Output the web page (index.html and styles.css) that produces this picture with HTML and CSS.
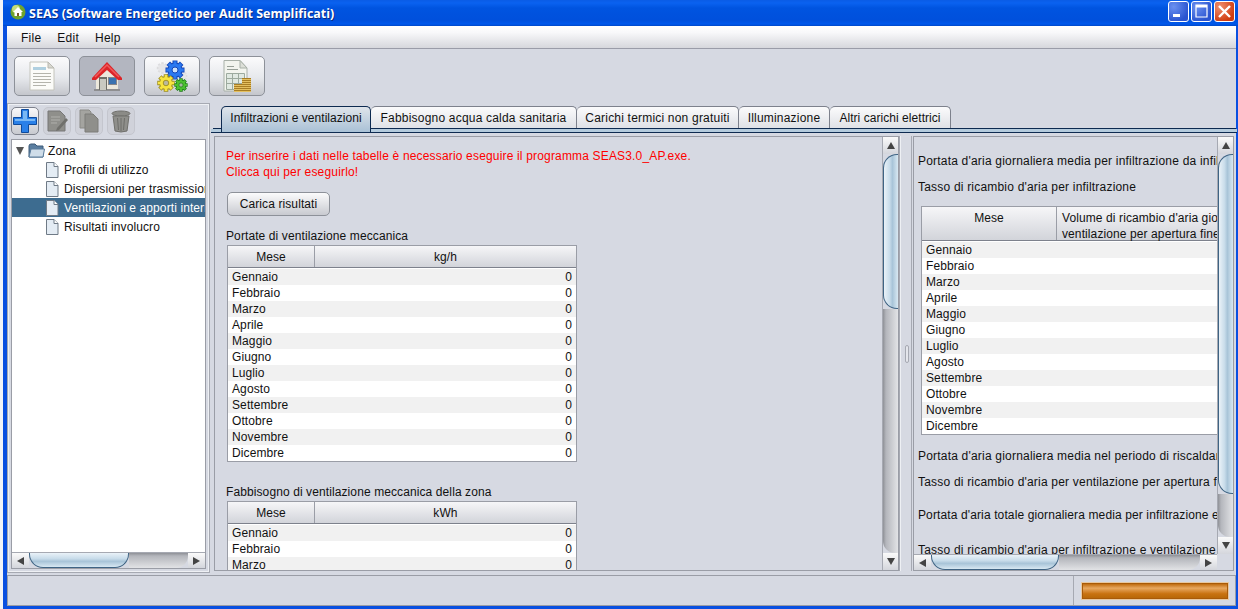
FILE: index.html
```html
<!DOCTYPE html>
<html lang="it">
<head>
  <meta charset="UTF-8">
  <title>SEAS (Software Energetico per Audit Semplificati)</title>
  <link rel="stylesheet" href="styles.css">
</head>
<body>
<div class="window">

  <!-- Barra del titolo -->
  <div class="titlebar">
    <svg class="app-icon" width="16" height="16" viewBox="0 0 16 16">
      <circle cx="8" cy="8" r="7.5" fill="#6fa32c"/>
      <circle cx="6" cy="5" r="4" fill="#c4dc7c"/>
      <path d="M8 3 L13 8 H11.5 V12 H4.5 V8 H3 Z" fill="#fff"/>
      <rect x="7" y="9" width="2" height="3" fill="#7a5a2a"/>
    </svg>
    <span class="title-text">SEAS (Software Energetico per Audit Semplificati)</span>
    <div class="win-buttons">
      <div class="win-btn"><svg width="21" height="21" viewBox="0 0 21 21"><rect x="5" y="13" width="7" height="3" fill="#fff"/></svg></div>
      <div class="win-btn"><svg width="21" height="21" viewBox="0 0 21 21"><path d="M5 4 H16 V16 H5 Z" fill="none" stroke="#fff" stroke-width="1.2"/><rect x="5" y="4" width="11" height="2.5" fill="#fff"/></svg></div>
      <div class="win-btn close"><svg width="21" height="21" viewBox="0 0 21 21"><path d="M5 5 L16 16 M16 5 L5 16" stroke="#fff" stroke-width="2.4"/></svg></div>
    </div>
  </div>

  <!-- Menu -->
  <div class="menubar">
    <span>File</span>
    <span>Edit</span>
    <span>Help</span>
  </div>

  <!-- Barra strumenti -->
  <div class="toolbar">
    <div class="tool-btn">
      <svg width="28" height="30" viewBox="0 0 28 30">
        <path d="M2 1 H20 L26 7 V29 H2 Z" fill="#fbfbf8" stroke="#c4c4bc"/>
        <path d="M20 1 V7 H26 Z" fill="#d8d8d0" stroke="#b8b8b0"/>
        <rect x="5" y="6" width="13" height="3" fill="#b0d0e0"/>
        <path d="M5 12.500 H23 M5 15.500 H23 M5 18.500 H23 M5 21.500 H23 M5 24.500 H18" stroke="#b4b4ac"/>
      </svg>
    </div>
    <div class="tool-btn active">
      <svg width="32" height="30" viewBox="0 0 32 30">
        <path d="M5 15 L16 5 L27 15 V29 H5 Z" fill="#ece8dc"/>
        <rect x="3" y="28" width="26" height="2" fill="#8e8e90"/>
        <rect x="8" y="16" width="8" height="13" fill="#6f6f68"/>
        <rect x="9" y="18" width="6" height="11" fill="#c9c9c0"/>
        <rect x="17.500" y="16.500" width="8" height="7" fill="#3a72b0" stroke="#85858a"/>
        <path d="M1 17 L16 1 L31 17 V19 H27 L16 9 L5 19 H1 Z" fill="#dc2428"/>
        <path d="M4 16 L16 4 L28 16" fill="none" stroke="#f05a5a" stroke-width="1.500"/>
      </svg>
    </div>
    <div class="tool-btn">
      <svg width="32" height="32" viewBox="0 0 32 32">
        <defs>
          <path id="gearTeeth" d="M0 -9.500 V9.500 M-9.500 0 H9.500 M-6.700 -6.700 L6.700 6.700 M-6.700 6.700 L6.700 -6.700" fill="none"/>
        </defs>
        <g transform="translate(6.500 8) scale(.6)">
          <use href="#gearTeeth" stroke="#dcdcde" stroke-width="4"/>
          <circle r="7" fill="#e6e6e8"/>
        </g>
        <g transform="translate(27 16) scale(.45)">
          <use href="#gearTeeth" stroke="#dcdcde" stroke-width="4"/>
          <circle r="7" fill="#e6e6e8"/>
        </g>
        <g transform="translate(19 10)">
          <use href="#gearTeeth" stroke="#1446b8" stroke-width="5"/>
          <circle r="7.500" fill="#1446b8"/>
          <use href="#gearTeeth" stroke="#2a78f0" stroke-width="3.200" transform="scale(.92)"/>
          <circle r="6.500" fill="#2a78f0"/>
          <circle r="3" fill="#cfe2fa" stroke="#1446b8"/>
        </g>
        <g transform="translate(10 23) scale(.92)">
          <use href="#gearTeeth" stroke="#a09020" stroke-width="5"/>
          <circle r="7.500" fill="#a09020"/>
          <use href="#gearTeeth" stroke="#f6e440" stroke-width="3.200" transform="scale(.92)"/>
          <circle r="6.500" fill="#f6e440"/>
          <circle r="3" fill="#b8b8a0" stroke="#a09020"/>
        </g>
        <g transform="translate(25 25) scale(.7)">
          <use href="#gearTeeth" stroke="#1c7c18" stroke-width="5"/>
          <circle r="7.500" fill="#1c7c18"/>
          <use href="#gearTeeth" stroke="#4cc030" stroke-width="3.200" transform="scale(.92)"/>
          <circle r="6.500" fill="#4cc030"/>
          <circle r="3" fill="#a8b8a0" stroke="#1c7c18"/>
        </g>
      </svg>
    </div>
    <div class="tool-btn">
      <svg width="30" height="32" viewBox="0 0 30 32">
        <path d="M2 .500 H18 L25 8 V31 H2 Z" fill="#f2f4ee" stroke="#a8b0a8"/>
        <path d="M18 .500 V8 H25 Z" fill="#dcdfd8" stroke="#a8b0a8"/>
        <path d="M5 6.500 H12 M5 9.500 H16" stroke="#98a098"/>
        <path d="M4.500 13.500 H22.500 V29.500 H4.500 Z M4.500 18.500 H22.500 M4.500 23.500 H22.500 M10.500 13.500 V29.500 M16.500 13.500 V29.500" fill="#e0e9e2" stroke="#9caa9e"/>
        <path d="M12 24.500 H20 M12 26.500 H20 M12 28.500 H20 M12 30.500 H20 M20 18.500 H29 M20 20.500 H29 M20 22.500 H29 M20 24.500 H29 M20 26.500 H29 M20 28.500 H29 M20 30.500 H29" stroke="#a87e24"/>
        <path d="M12 25.500 H20 M12 27.500 H20 M12 29.500 H20 M12 31.500 H20 M20 19.500 H29 M20 21.500 H29 M20 23.500 H29 M20 25.500 H29 M20 27.500 H29 M20 29.500 H29 M20 31.500 H29" stroke="#e4c060"/>
      </svg>
    </div>
  </div>

  <div class="main">

    <!-- Pannello sinistro con albero -->
    <div class="side">
      <div class="side-tools">
        <div class="mini-btn enabled">
          <svg width="26" height="26" viewBox="0 0 26 26"><path d="M9.500 1.500 H16.500 V9.500 H24.500 V16.500 H16.500 V24.500 H9.500 V16.500 H1.500 V9.500 H9.500 Z" fill="#2a80e8" stroke="#0e4a9c"/><path d="M11 3 H15 V11 H23 V13 H11 Z M3 11 H11 V13 H3 Z" fill="#7ab8f4"/></svg>
        </div>
        <div class="mini-btn">
          <svg width="22" height="24" viewBox="0 0 22 24"><path d="M2 2 H14 L19 7 V22 H2 Z" fill="#8f8f8b" stroke="#777"/><path d="M5 8 H14 M5 11 H14 M5 14 H11" stroke="#b0b0ac"/><path d="M11 19 L20 9 L22 11 L13 21 L10 22 Z" fill="#70706c"/></svg>
        </div>
        <div class="mini-btn">
          <svg width="22" height="24" viewBox="0 0 22 24"><path d="M2 1 H11 L13 3 V19 H2 Z" fill="#a4a4a0" stroke="#8a8a86"/><path d="M7 5 H15 L20 10 V23 H7 Z" fill="#8f8f8b" stroke="#7c7c78"/></svg>
        </div>
        <div class="mini-btn">
          <svg width="22" height="24" viewBox="0 0 22 24"><ellipse cx="11" cy="4.500" rx="9" ry="2.500" fill="#8b8b87" stroke="#70706c"/><path d="M3 7 H19 L17 22 Q11 24 5 22 Z" fill="#8f8f8b" stroke="#70706c"/><path d="M7.500 9 L8.500 21 M11 9 V22 M14.500 9 L13.500 21" stroke="#6e6e6a"/></svg>
        </div>
      </div>
      <div class="tree-box">
        <div class="tree">
          <div class="tree-row root">
            <span class="tree-arrow"></span>
            <svg width="17" height="16" viewBox="0 0 17 16"><path d="M1 3 Q1 1 3 1 H7 L9 3 H15 V14 H1 Z" fill="#5a7ea0" stroke="#3c5a78"/><path d="M3 6 H16.500 L15 14 H1 Z" fill="#cfdde9" stroke="#5a7c9c"/></svg>
            <span>Zona</span>
          </div>
          <div class="tree-row"><svg class="doc" width="14" height="16" viewBox="0 0 14 16"><path d="M1.500 .500 H9 L13 4.500 V15.500 H1.500 Z" fill="#e4ecf4" stroke="#6f7a86"/><path d="M9 .500 V4.500 H13" fill="#fff" stroke="#6f7a86"/></svg><span>Profili di utilizzo</span></div>
          <div class="tree-row"><svg class="doc" width="14" height="16" viewBox="0 0 14 16"><path d="M1.500 .500 H9 L13 4.500 V15.500 H1.500 Z" fill="#e4ecf4" stroke="#6f7a86"/><path d="M9 .500 V4.500 H13" fill="#fff" stroke="#6f7a86"/></svg><span>Dispersioni per trasmissione</span></div>
          <div class="tree-row selected"><svg class="doc" width="14" height="16" viewBox="0 0 14 16"><path d="M1.500 .500 H9 L13 4.500 V15.500 H1.500 Z" fill="#e4ecf4" stroke="#6f7a86"/><path d="M9 .500 V4.500 H13" fill="#fff" stroke="#6f7a86"/></svg><span>Ventilazioni e apporti interni</span></div>
          <div class="tree-row"><svg class="doc" width="14" height="16" viewBox="0 0 14 16"><path d="M1.500 .500 H9 L13 4.500 V15.500 H1.500 Z" fill="#e4ecf4" stroke="#6f7a86"/><path d="M9 .500 V4.500 H13" fill="#fff" stroke="#6f7a86"/></svg><span>Risultati involucro</span></div>
        </div>
        <div class="hbar">
          <div class="sb-btn"><i class="arr left"></i></div>
          <div class="hthumb tree-thumb"></div>
          <div class="htrack"></div>
          <div class="sb-btn"><i class="arr right"></i></div>
        </div>
      </div>
    </div>

    <!-- Area a schede -->
    <div class="tab-area">
      <div class="tabs">
        <div class="tab selected">Infiltrazioni e ventilazioni</div>
        <div class="tab">Fabbisogno acqua calda sanitaria</div>
        <div class="tab">Carichi termici non gratuiti</div>
        <div class="tab">Illuminazione</div>
        <div class="tab">Altri carichi elettrici</div>
      </div>
      <div class="tab-band"></div>
      <div class="tab-body">

        <div class="pane center-pane">
          <div class="pane-content">
            <div class="scroll-content">
              <p class="warn">Per inserire i dati nelle tabelle è necessario eseguire il programma SEAS3.0_AP.exe.</p>
              <p class="warn">Clicca qui per eseguirlo!</p>
              <button class="load-btn">Carica risultati</button>
              <p class="caption first">Portate di ventilazione meccanica</p>
              <div class="table" id="tblPortate"></div>
              <p class="caption second">Fabbisogno di ventilazione meccanica della zona</p>
              <div class="table" id="tblFabbisogno"></div>
            </div>
          </div>
          <div class="vbar">
            <div class="sb-btn"><i class="arr up"></i></div>
            <div class="vthumb center-thumb"></div>
            <div class="vtrack"></div>
            <div class="sb-btn"><i class="arr down"></i></div>
          </div>
        </div>

        <div class="divider"><span class="grip"></span></div>

        <div class="pane right-pane">
          <div class="right-top">
            <div class="pane-content">
              <div class="scroll-content wide">
                <p class="r-line l1">Portata d'aria giornaliera media per infiltrazione da infiltrazioni</p>
                <p class="r-line l2">Tasso di ricambio d'aria per infiltrazione</p>
                <div class="table wide-table" id="tblRicambio"></div>
                <p class="r-line l3">Portata d'aria giornaliera media nel periodo di riscaldamento</p>
                <p class="r-line l4">Tasso di ricambio d'aria per ventilazione per apertura finestre</p>
                <p class="r-line l5">Portata d'aria totale giornaliera media per infiltrazione e ventilazione</p>
                <p class="r-line l6">Tasso di ricambio d'aria per infiltrazione e ventilazione</p>
              </div>
            </div>
            <div class="vbar">
              <div class="sb-btn"><i class="arr up"></i></div>
              <div class="vthumb right-thumb"></div>
              <div class="vtrack"></div>
              <div class="sb-btn"><i class="arr down"></i></div>
            </div>
          </div>
          <div class="right-bottom">
            <div class="hbar">
              <div class="sb-btn"><i class="arr left"></i></div>
              <div class="hthumb pane-thumb"></div>
              <div class="htrack"></div>
              <div class="sb-btn"><i class="arr right"></i></div>
            </div>
            <div class="corner"></div>
          </div>
        </div>

      </div>
    </div>
  </div>

  <!-- Barra di stato -->
  <div class="statusbar">
    <div class="status-left"></div>
    <div class="status-right"><div class="progress"></div></div>
  </div>
</div>

<script>
  // Riempie le tabelle dei mesi
  var mesi = ['Gennaio','Febbraio','Marzo','Aprile','Maggio','Giugno','Luglio','Agosto','Settembre','Ottobre','Novembre','Dicembre'];

  function buildTable(id, head, showZero, righe) {
    var html = '<div class="thead"><div class="th month">Mese</div><div class="th val">' + head + '</div></div>';
    for (var i = 0; i < righe; i++) {
      html += '<div class="tr"><div class="td month">' + mesi[i] + '</div><div class="td val">' + (showZero ? '0' : '') + '</div></div>';
    }
    document.getElementById(id).innerHTML = html;
  }

  buildTable('tblPortate', 'kg/h', true, 12);
  buildTable('tblFabbisogno', 'kWh', true, 3);
  buildTable('tblRicambio', "Volume di ricambio d'aria giornaliero per<br>ventilazione per apertura finestre", false, 12);
</script>
</body>
</html>
```

FILE: styles.css
```css
* {
  box-sizing: border-box;
}

html, body {
  margin: 0;
  padding: 0;
  height: 609px;
  overflow: hidden;
  background: #f4f5f8;
}

body {
  font-family: 'Liberation Sans', Arial, sans-serif;
  font-size: 12px;
  letter-spacing: 0.1px;
  color: #111;
}

.window {
  margin-left: 3px;
  width: 1235px;
  height: 609px;
  display: flex;
  flex-direction: column;
  background: #d6d9e2;
  border-left: 4px solid #0a50e0;
  border-right: 2px solid #0a50e0;
  border-bottom: 3px solid #0a50e0;
}

/* barra del titolo */
.titlebar {
  height: 26px;
  margin: 0 -2px 0 -4px;
  padding-left: 7px;
  display: flex;
  align-items: center;
  background: linear-gradient(to bottom, #0a5ce6 0, #0a62f0 3px, #0054e0 8px, #0050dc 20px, #0058ec 24px, #0048c8 26px);
  color: #fff;
  flex-shrink: 0;
}

.app-icon {
  margin-right: 3px;
  margin-bottom: 2px;
}

.title-text {
  font-family: 'Open Sans', sans-serif;
  font-weight: 700;
  font-size: 12.5px;
  letter-spacing: 0;
  text-shadow: 1px 1px 0 #0a2a80;
}

.win-buttons {
  margin-left: auto;
  margin-right: 3px;
  margin-bottom: 3px;
  display: flex;
  gap: 2px;
}

.win-btn {
  width: 21px;
  height: 21px;
  border: 1px solid #fff;
  border-radius: 3px;
  background: radial-gradient(circle at 25% 25%, #6a90f0, #2a54d0 75%);
}

.win-btn svg {
  display: block;
  margin: -1px;
}

.win-btn.close {
  background: radial-gradient(circle at 25% 25%, #f09070, #d03c10 75%);
}

/* menu */
.menubar {
  height: 23px;
  padding: 2px 0 0 14px;
  display: flex;
  align-items: center;
  gap: 16px;
  background: linear-gradient(to bottom, #fff 0, #f8f8fa 30%, #d6d7dc 100%);
  border-bottom: 1px solid #9a9ca8;
  letter-spacing: 0.25px;
  flex-shrink: 0;
}

/* barra strumenti */
.toolbar {
  height: 54px;
  padding: 7px 0 0 7px;
  display: flex;
  gap: 9px;
  flex-shrink: 0;
}

.tool-btn {
  width: 56px;
  height: 40px;
  display: flex;
  align-items: center;
  justify-content: center;
  border: 1px solid #8d9199;
  border-radius: 5px;
  background: linear-gradient(to bottom, #fbfbfc 0, #e6e8ec 55%, #c4c6cc 100%);
}

.tool-btn.active {
  background: #b3b6c0;
  border-color: #8d9199;
}

.main {
  height: 472px;
  display: flex;
  flex-shrink: 0;
}

/* pannello sinistro */
.side {
  width: 203px;
  height: 470px;
  padding: 3px;
  display: flex;
  flex-direction: column;
  border: 1px solid #a6a9b2;
  box-shadow: inset 0 0 0 1px #eef0f4;
}

.side-tools {
  height: 32px;
  display: flex;
  gap: 4px;
  flex-shrink: 0;
}

.mini-btn {
  width: 28px;
  height: 28px;
  display: flex;
  align-items: center;
  justify-content: center;
  border: 1px solid #c4c6ce;
  border-radius: 5px;
  background: #d0d2da;
}

.mini-btn.enabled {
  border-color: #7d818c;
  background: linear-gradient(to bottom, #f8f8fa, #c8cad0);
}

.tree-box {
  flex: 1;
  display: flex;
  flex-direction: column;
  border: 1px solid #9a9da6;
  background: #fff;
  min-height: 0;
}

.tree {
  flex: 1;
  padding-top: 1px;
  overflow: hidden;
}

.tree-row {
  height: 19px;
  display: flex;
  align-items: center;
  padding-left: 33px;
  white-space: nowrap;
}

.tree-row .doc {
  margin-right: 5px;
  flex-shrink: 0;
}

.tree-row.root {
  padding-left: 4px;
}

.tree-row.root svg {
  margin-right: 3px;
}

.tree-arrow {
  width: 0;
  height: 0;
  margin-right: 4px;
  border-left: 4px solid transparent;
  border-right: 4px solid transparent;
  border-top: 8px solid #555;
}

.tree-row.selected {
  background: #3d6c90;
  color: #fff;
}

/* barre di scorrimento */
.hbar {
  height: 16px;
  display: flex;
  flex-shrink: 0;
  background: #d6d9e2;
  border-top: 1px solid #a6a9b2;
}

.vbar {
  width: 16px;
  display: flex;
  flex-direction: column;
  flex-shrink: 0;
  border-left: 1px solid #a6a9b2;
}

.sb-btn {
  flex: 0 0 17px;
  display: flex;
  align-items: center;
  justify-content: center;
  background: linear-gradient(to bottom, #fafafa, #d4d6dc);
}

.arr {
  width: 0;
  height: 0;
  display: block;
}

.arr.left { border: 4px solid transparent; border-left: 0; border-right: 7px solid #444; }
.arr.right { border: 4px solid transparent; border-right: 0; border-left: 7px solid #444; }
.arr.up { border: 4px solid transparent; border-top: 0; border-bottom: 7px solid #444; }
.arr.down { border: 4px solid transparent; border-bottom: 0; border-top: 7px solid #444; }

.hthumb {
  height: 100%;
  border: 1px solid #3f6484;
  border-top: 0;
  border-radius: 0 0 14px 14px / 0 0 14px 14px;
  background: linear-gradient(to bottom, #eaf2f8 0, #c8dcea 40%, #a8c4d8 60%, #d8e8f2 100%);
}

.tree-thumb { width: 100px; }
.pane-thumb { width: 128px; }

.htrack {
  flex: 1;
  background: linear-gradient(to bottom, #8f9197 0, #b4b6bc 20%, #e2e3e6 100%);
  border-radius: 0 0 12px 0;
}

.vthumb {
  width: 100%;
  border: 1px solid #3f6484;
  border-right: 0;
  border-radius: 14px 0 0 14px / 14px 0 0 14px;
  background: linear-gradient(to right, #eaf2f8 0, #c8dcea 40%, #a8c4d8 60%, #d8e8f2 100%);
}

.center-thumb { flex: 0 0 155px; }
.right-thumb { flex: 0 0 340px; }

.vtrack {
  flex: 1;
  background: linear-gradient(to right, #8f9197 0, #b4b6bc 20%, #e2e3e6 100%);
  border-radius: 0 0 0 12px;
}

/* area a schede */
.tab-area {
  flex: 1;
  min-width: 0;
  height: 470px;
  margin-left: 3px;
  display: flex;
  flex-direction: column;
}

.tabs {
  height: 26px;
  padding: 3px 0 0 8px;
  display: flex;
  flex-shrink: 0;
  border-bottom: 1px solid #0d2a50;
}

.tab {
  height: 22px;
  display: flex;
  align-items: center;
  justify-content: center;
  border: 1px solid #7d818c;
  border-bottom: 0;
  border-left: 0;
  border-radius: 5px 5px 0 0;
  background: linear-gradient(to bottom, #fbfbfc, #dfe1e6);
  letter-spacing: 0.2px;
  white-space: nowrap;
}

.tab:nth-child(1) { width: 150px; letter-spacing: 0.05px; }
.tab:nth-child(2) { width: 206px; }
.tab:nth-child(3) { width: 162px; }
.tab:nth-child(4) { width: 91px; }
.tab:nth-child(5) { width: 121px; letter-spacing: 0.05px; }

.tab.selected {
  height: 26px;
  padding-bottom: 4px;
  position: relative;
  z-index: 1;
  border: 1px solid #0d2a50;
  border-bottom: 0;
  background: linear-gradient(to bottom, #dfe4ea 0, #a9c1d6 100%);
}

.tab-band {
  height: 4px;
  flex-shrink: 0;
  margin-left: -2px;
  margin-right: -1px;
  background: #b4cbdd;
  border-bottom: 1px solid #0d2a50;
}

.tab-body {
  flex: 1;
  min-height: 0;
  margin-top: 3px;
  padding-left: 1px;
  display: flex;
}

.pane {
  height: 435px;
  border: 1px solid #9a9da6;
  display: flex;
  background: #d6d9e2;
}

.center-pane {
  width: 685px;
}

.pane-content {
  flex: 1;
  min-width: 0;
  overflow: hidden;
}

.scroll-content {
  padding: 11px 0 0 11px;
}

.scroll-content p {
  margin: 0;
}

.warn {
  color: #f00;
  height: 16px;
  line-height: 16px;
  letter-spacing: 0.17px;
  white-space: nowrap;
}

.load-btn {
  display: block;
  width: 103px;
  height: 24px;
  margin: 12px 0 0 1px;
  padding: 0;
  border: 1px solid #8d9199;
  border-radius: 5px;
  background: linear-gradient(to bottom, #fbfbfc, #c8cad0);
  font: inherit;
  letter-spacing: inherit;
  color: inherit;
}

.caption {
  height: 16px;
  line-height: 16px;
  white-space: nowrap;
}

.caption.first { margin-top: 12px; }
.caption.second { margin-top: 22px; }

.table {
  width: 350px;
  margin: 1px 0 0 1px;
  border: 1px solid #9a9da6;
  background: #fff;
}

.thead {
  display: flex;
  height: 22px;
  background: linear-gradient(to bottom, #f6f6f8, #d2d4da);
  border-bottom: 1px solid #7d818c;
}

.th {
  display: flex;
  align-items: center;
  justify-content: center;
}

.th.month,
.td.month {
  width: 87px;
  flex-shrink: 0;
}

.th.month {
  border-right: 1px solid #9a9da6;
}

.th.val,
.td.val {
  flex: 1;
}

.tr {
  display: flex;
  height: 16px;
  line-height: 16px;
}

.thead + .tr {
  margin-top: 1px;
}

.tr:nth-child(even) {
  background: #f1f1f1;
}

.td.month {
  padding-left: 4px;
}

.td.val {
  text-align: right;
  padding-right: 4px;
}

/* divisore */
.divider {
  width: 14px;
  height: 435px;
  display: flex;
  align-items: center;
  justify-content: center;
  flex-shrink: 0;
  padding-left: 1px;
  background: linear-gradient(to right, #a6a9b2 1px, #eef0f4 1px, #eef0f4 2px, transparent 2px, transparent 12px, #a6a9b2 12px, #a6a9b2 13px, transparent 13px);
}

.grip {
  width: 4px;
  height: 18px;
  border: 1px solid #a6a9b2;
  border-radius: 2px;
  background: #e4e6ec;
}

/* pannello destro */
.right-pane {
  width: 321px;
  flex-direction: column;
}

.right-top {
  flex: 1;
  min-height: 0;
  display: flex;
}

.right-bottom {
  height: 16px;
  display: flex;
  flex-shrink: 0;
}

.right-bottom .hbar {
  flex: 1;
}

.corner {
  width: 16px;
}

.scroll-content.wide {
  width: 600px;
  padding: 16px 0 0 4px;
}

.r-line {
  height: 16px;
  line-height: 16px;
  letter-spacing: 0.2px;
  white-space: nowrap;
}

.r-line.l2 { margin-top: 10px; }
.r-line.l3 { margin-top: 13px; }
.r-line.l4 { margin-top: 10px; }
.r-line.l5 { margin-top: 17px; letter-spacing: 0.12px; }
.r-line.l6 { margin-top: 19px; }

.wide-table {
  width: 500px;
  margin: 11px 0 0 3px;
}

.wide-table .thead {
  height: 34px;
}

.wide-table .th.month,
.wide-table .td.month {
  width: 135px;
}

.wide-table .th {
  align-items: flex-start;
  padding-top: 3px;
  line-height: 16px;
}

.wide-table .th.val {
  justify-content: flex-start;
  padding-left: 5px;
}

/* barra di stato */
.statusbar {
  flex: 1;
  display: flex;
  border: 1px solid #9a9da6;
  min-height: 0;
}

.status-left {
  flex: 1;
  border-right: 1px solid #a6a9b2;
}

.status-right {
  width: 161px;
  display: flex;
  align-items: center;
  justify-content: center;
}

.progress {
  width: 146px;
  height: 16px;
  border: 1px solid #a85a08;
  background: linear-gradient(to bottom, #c06c10 0, #e8a860 30%, #c87210 70%, #b86808 100%);
  box-shadow: 0 0 0 1px #e8c8a0;
}
```
